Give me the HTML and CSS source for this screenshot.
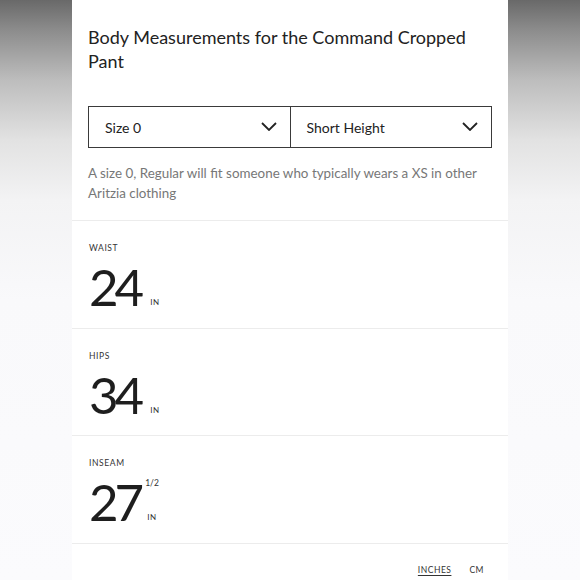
FILE: index.html
```html
<!DOCTYPE html>
<html>
<head>
<meta charset="utf-8">
<link rel="stylesheet" href="styles.css">
</head>
<body>
<div class="panel">
  <h1 class="title">Body Measurements for the Command Cropped Pant</h1>
  <div class="selects">
    <div class="select">
      <span>Size 0</span>
      <svg class="chev" viewBox="0 0 16 9" width="16" height="9"><path d="M1 1 L8 8 L15 1" fill="none" stroke="#222" stroke-width="1.8"/></svg>
    </div>
    <div class="select">
      <span>Short Height</span>
      <svg class="chev" viewBox="0 0 16 9" width="16" height="9"><path d="M1 1 L8 8 L15 1" fill="none" stroke="#222" stroke-width="1.8"/></svg>
    </div>
  </div>
  <p class="desc">A size 0, Regular will fit someone who typically wears a XS in other Aritzia clothing</p>
  <div class="measure">
    <div class="label">WAIST</div>
    <div class="value"><span class="num">24</span><span class="unit">IN</span></div>
  </div>
  <div class="measure">
    <div class="label">HIPS</div>
    <div class="value"><span class="num">34</span><span class="unit">IN</span></div>
  </div>
  <div class="measure">
    <div class="label">INSEAM</div>
    <div class="value"><span class="num">27</span><span class="frac-wrap"><span class="frac">1/2</span><span class="unit">IN</span></span></div>
  </div>
  <div class="units">
    <span class="u active">INCHES</span>
    <span class="u">CM</span>
  </div>
</div>
</body>
</html>
```

FILE: styles.css
```css
html, body {
  margin: 0;
  padding: 0;
  height: 100%;
}
body {
  background: linear-gradient(to bottom, #696969 0px, #8c8c8c 30px, #bdbdbd 80px, #e2e2e2 140px, #f3f3f4 200px, #f9f9fb 300px, #fbfbfd 580px);
  font-family: Lato, "Noto Sans", sans-serif;
  color: #222;
  overflow: hidden;
}
.panel {
  margin-left: 72px;
  width: 436px;
  background: #fff;
  min-height: 580px;
  box-sizing: border-box;
}
.title {
  margin: 0;
  padding: 25px 16px 0 16px;
  font-size: 18px;
  font-weight: 400;
  line-height: 24px;
  color: #222;
}
.selects {
  margin: 33px 16px 0 16px;
  display: flex;
  border: 1.5px solid #3a3a3a;
  height: 40px;
}
.select {
  flex: 1;
  display: flex;
  align-items: center;
  justify-content: space-between;
  padding: 0 13px 0 16px;
  font-size: 14px;
  color: #222;
}
.select + .select {
  border-left: 1.5px solid #3a3a3a;
}
.chev {
  display: block;
  margin-top: -1px;
}
.desc {
  margin: 0;
  padding: 15px 16px 17px 16px;
  font-size: 13.4px;
  line-height: 20px;
  color: #777;
  border-bottom: 1.5px solid #ececec;
}
.measure {
  padding: 22px 16px 0 17px;
  height: 107.5px;
  box-sizing: border-box;
  border-bottom: 1.5px solid #ececec;
}
.label {
  font-size: 8.5px;
  letter-spacing: 0.6px;
  color: #333;
  line-height: 10px;
}
.value {
  display: flex;
  align-items: flex-end;
  margin-top: 8px;
}
.num {
  font-size: 51px;
  line-height: 52px;
  font-weight: 400;
  color: #1e1e1e;
  letter-spacing: -4px;
}
.unit {
  font-size: 8px;
  letter-spacing: 0.5px;
  color: #333;
  margin-left: 10px;
  margin-bottom: 6px;
}
.frac-wrap {
  display: flex;
  flex-direction: column;
  justify-content: space-between;
  align-self: stretch;
  margin-left: 5px;
}
.frac-wrap .unit {
  margin-left: 2px;
}
.frac {
  font-size: 8.5px;
  color: #333;
  margin-top: 2px;
}
.units {
  display: flex;
  justify-content: flex-end;
  gap: 18px;
  padding: 21px 24px 0 0;
  font-size: 8.5px;
  letter-spacing: 0.5px;
  color: #333;
}
.u.active {
  text-decoration: underline;
  text-underline-offset: 2px;
}
```
